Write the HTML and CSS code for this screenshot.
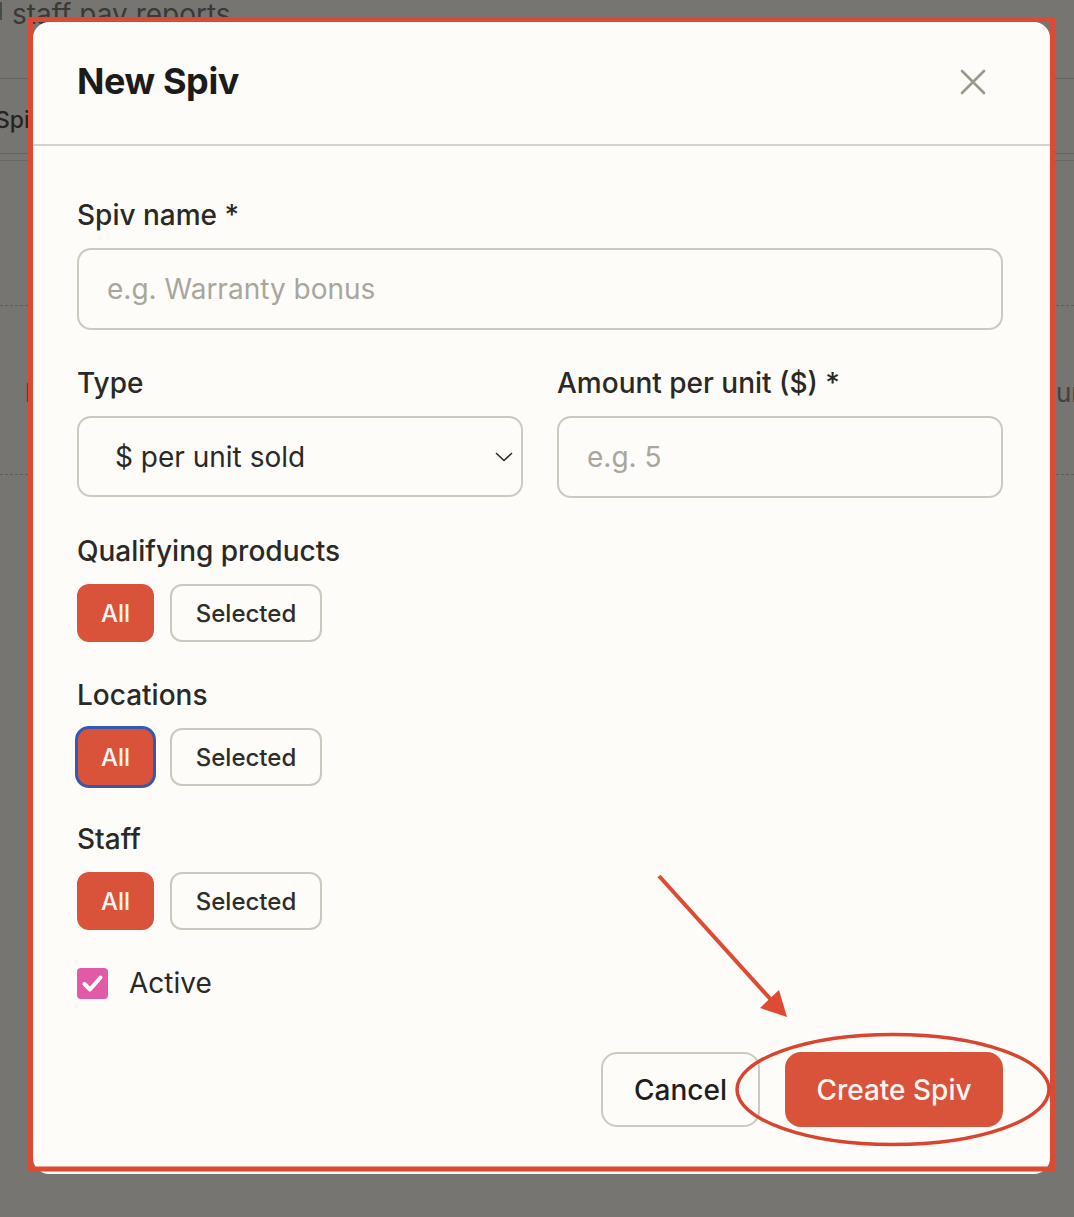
FILE: index.html
```html
<!DOCTYPE html>
<html lang="en">
<head>
<meta charset="utf-8">
<title>New Spiv</title>
<link rel="stylesheet" href="styles.css">
</head>
<body>
  <div class="page">
    <div class="page-title"><span class="bar"></span>staff pay reports</div>
    <div class="tabbar"><span class="tab">Spiv</span></div>
    <div class="tabline"></div>
    <div class="table">
      <div class="trow"><span class="cell-left">l</span><span class="cell-right">units</span></div>
    </div>
  </div>

  <div class="modal" role="dialog" aria-labelledby="modal-title">
    <div class="modal-header">
      <h2 id="modal-title" class="modal-title">New Spiv</h2>
      <button class="close" aria-label="Close">
        <svg width="26" height="26" viewBox="0 0 26 26" fill="none" stroke="currentColor" stroke-width="2.6" stroke-linecap="round"><path d="M2 2 L24 24 M24 2 L2 24"/></svg>
      </button>
    </div>

    <div class="modal-body">
      <div class="field">
        <label class="label">Spiv name *</label>
        <input class="input" type="text" placeholder="e.g. Warranty bonus">
      </div>

      <div class="row2">
        <div class="field">
          <label class="label">Type</label>
          <div class="input select">
            <span>$ per unit sold</span>
            <svg width="18" height="10" viewBox="0 0 18 10" fill="none" stroke="#2a2926" stroke-width="1.6" stroke-linecap="round" stroke-linejoin="round"><path d="M1.5 1.5 L9 8.5 L16.5 1.5"/></svg>
          </div>
        </div>
        <div class="field">
          <label class="label">Amount per unit ($) *</label>
          <input class="input amount" type="text" placeholder="e.g. 5">
        </div>
      </div>

      <div class="field">
        <span class="label">Qualifying products</span>
        <div class="toggles">
          <button class="toggle on">All</button>
          <button class="toggle">Selected</button>
        </div>
      </div>

      <div class="field">
        <span class="label">Locations</span>
        <div class="toggles">
          <button class="toggle on focused">All</button>
          <button class="toggle">Selected</button>
        </div>
      </div>

      <div class="field">
        <span class="label">Staff</span>
        <div class="toggles">
          <button class="toggle on">All</button>
          <button class="toggle">Selected</button>
        </div>
      </div>

      <div class="check-row">
        <span class="checkbox">
          <svg width="31" height="31" viewBox="0 0 31 31" fill="none" stroke="#ffffff" stroke-width="4" stroke-linecap="round" stroke-linejoin="round"><path d="M7.5 16 L13 21.5 L23.5 9.5"/></svg>
        </span>
        <span class="check-label">Active</span>
      </div>
    </div>

    <div class="modal-footer">
      <button class="btn btn-cancel">Cancel</button>
      <button class="btn btn-primary">Create Spiv</button>
    </div>
  </div>

  <svg class="annot" width="1074" height="1217" viewBox="0 0 1074 1217" fill="none">
    <rect x="30.5" y="19.5" width="1022" height="1149.5" stroke="#dc4a33" stroke-width="5"/>
    <ellipse cx="893" cy="1089.5" rx="156" ry="55" stroke="#d9442f" stroke-width="3.5"/>
    <line x1="659" y1="876" x2="774" y2="1003" stroke="#df4a33" stroke-width="4"/>
    <polygon points="787,1017 760,1008 779,990" fill="#df4a33"/>
  </svg>
</body>
</html>
```

FILE: styles.css
```css
* { box-sizing: border-box; }

html, body {
  margin: 0;
  padding: 0;
}

body {
  width: 1074px;
  height: 1217px;
  position: relative;
  overflow: hidden;
  background: #777571;
  font-family: Inter, "Noto Sans", "Liberation Sans", sans-serif;
}

/* dimmed page behind the dialog */
.page {
  color: #3a3936;
}

.page-title {
  display: flex;
  align-items: center;
  gap: 10px;
  font-size: 28px;
  line-height: 32px;
  margin-top: -2px;
  height: 32px;
}

.page-title .bar {
  width: 2px;
  height: 18px;
  margin-top: -6px;
  background: #4d4b48;
}

.tabbar {
  margin-top: 48px;
  height: 76px;
  padding-top: 8px;
  border-top: 1px solid #65635f;
  border-bottom: 1px solid #65635f;
  display: flex;
  align-items: center;
}

.tab {
  font-size: 23px;
  font-weight: 500;
  margin-left: -5px;
  color: #252422;
}

.tabline {
  margin-top: 6px;
  height: 1px;
  background: #696763;
}

.table {
  margin-top: 144px;
}

.trow {
  height: 170px;
  border-top: 1px dashed #5e5c59;
  border-bottom: 1px dashed #5e5c59;
  display: flex;
  align-items: center;
  justify-content: space-between;
  font-size: 26px;
  color: #42413e;
}

.cell-left {
  padding-left: 25px;
  padding-top: 4px;
}

.cell-right {
  margin-right: -41px;
  padding-top: 4px;
}

/* dialog */
.modal {
  position: absolute;
  left: 33px;
  top: 22px;
  width: 1017px;
  height: 1152px;
  background: #fdfcf8;
  border-radius: 16px;
  display: flex;
  flex-direction: column;
}

.modal-header {
  height: 124px;
  flex: none;
  display: flex;
  align-items: center;
  justify-content: space-between;
  padding: 0 64px 4px 44px;
  border-bottom: 2px solid #d6d3cb;
}

.modal-title {
  margin: 0;
  font-size: 36px;
  line-height: 44px;
  font-weight: 700;
  color: #1c1b19;
  letter-spacing: -0.4px;
}

.close {
  border: 0;
  padding: 0;
  background: transparent;
  color: #9c988b;
  width: 26px;
  height: 26px;
  display: flex;
  margin-top: 2px;
}

.modal-body {
  padding: 53px 47px 0 44px;
  display: flex;
  flex-direction: column;
  gap: 37px;
}

.field {
  display: flex;
  flex-direction: column;
  gap: 17px;
  min-width: 0;
}

.label {
  font-size: 28px;
  line-height: 32px;
  font-weight: 500;
  color: #2a2926;
}

.input {
  width: 100%;
  height: 82px;
  border: 2px solid #ccc9bf;
  border-radius: 14px;
  padding: 0 28px;
  font-family: inherit;
  font-size: 28px;
  color: #2a2926;
  background: transparent;
  outline: none;
}

.input::placeholder {
  color: #a9a69d;
}

.select {
  display: flex;
  align-items: center;
  justify-content: space-between;
  padding: 0 8px 0 36px;
  height: 81px;
}

.amount {
  height: 82px;
}

.row2 {
  display: grid;
  grid-template-columns: 1fr 1fr;
  gap: 34px;
}

.toggles {
  display: flex;
  gap: 16px;
}

.toggle {
  height: 58px;
  width: 152px;
  padding: 0;
  border: 2px solid #cbc8be;
  border-radius: 12px;
  background: transparent;
  font-family: inherit;
  font-size: 24px;
  font-weight: 500;
  color: #2e2d2a;
}

.toggle.on {
  background: #d9533a;
  border-color: #d9533a;
  color: #fff6f2;
  width: 77px;
}

.toggle.focused {
  outline: 3px solid #3558b0;
  outline-offset: -1px;
}

.check-row {
  display: flex;
  align-items: center;
  gap: 21px;
  height: 32px;
}

.checkbox {
  width: 31px;
  height: 31px;
  border-radius: 4px;
  background: #e05aa5;
  display: flex;
}

.check-label {
  font-size: 28px;
  color: #2a2926;
}

.modal-footer {
  margin-top: auto;
  display: flex;
  justify-content: flex-end;
  gap: 25px;
  padding: 0 47px 47px 0;
}

.btn {
  height: 75px;
  border-radius: 16px;
  font-family: inherit;
  font-size: 28px;
  font-weight: 500;
  padding: 0;
}

.btn-cancel {
  width: 159px;
  background: transparent;
  border: 2px solid #ccc9bf;
  color: #1f1e1c;
}

.btn-primary {
  width: 218px;
  background: #d9533a;
  border: 2px solid #d9533a;
  color: #fff6f2;
}

.annot {
  position: absolute;
  left: 0;
  top: 0;
  pointer-events: none;
}
```
